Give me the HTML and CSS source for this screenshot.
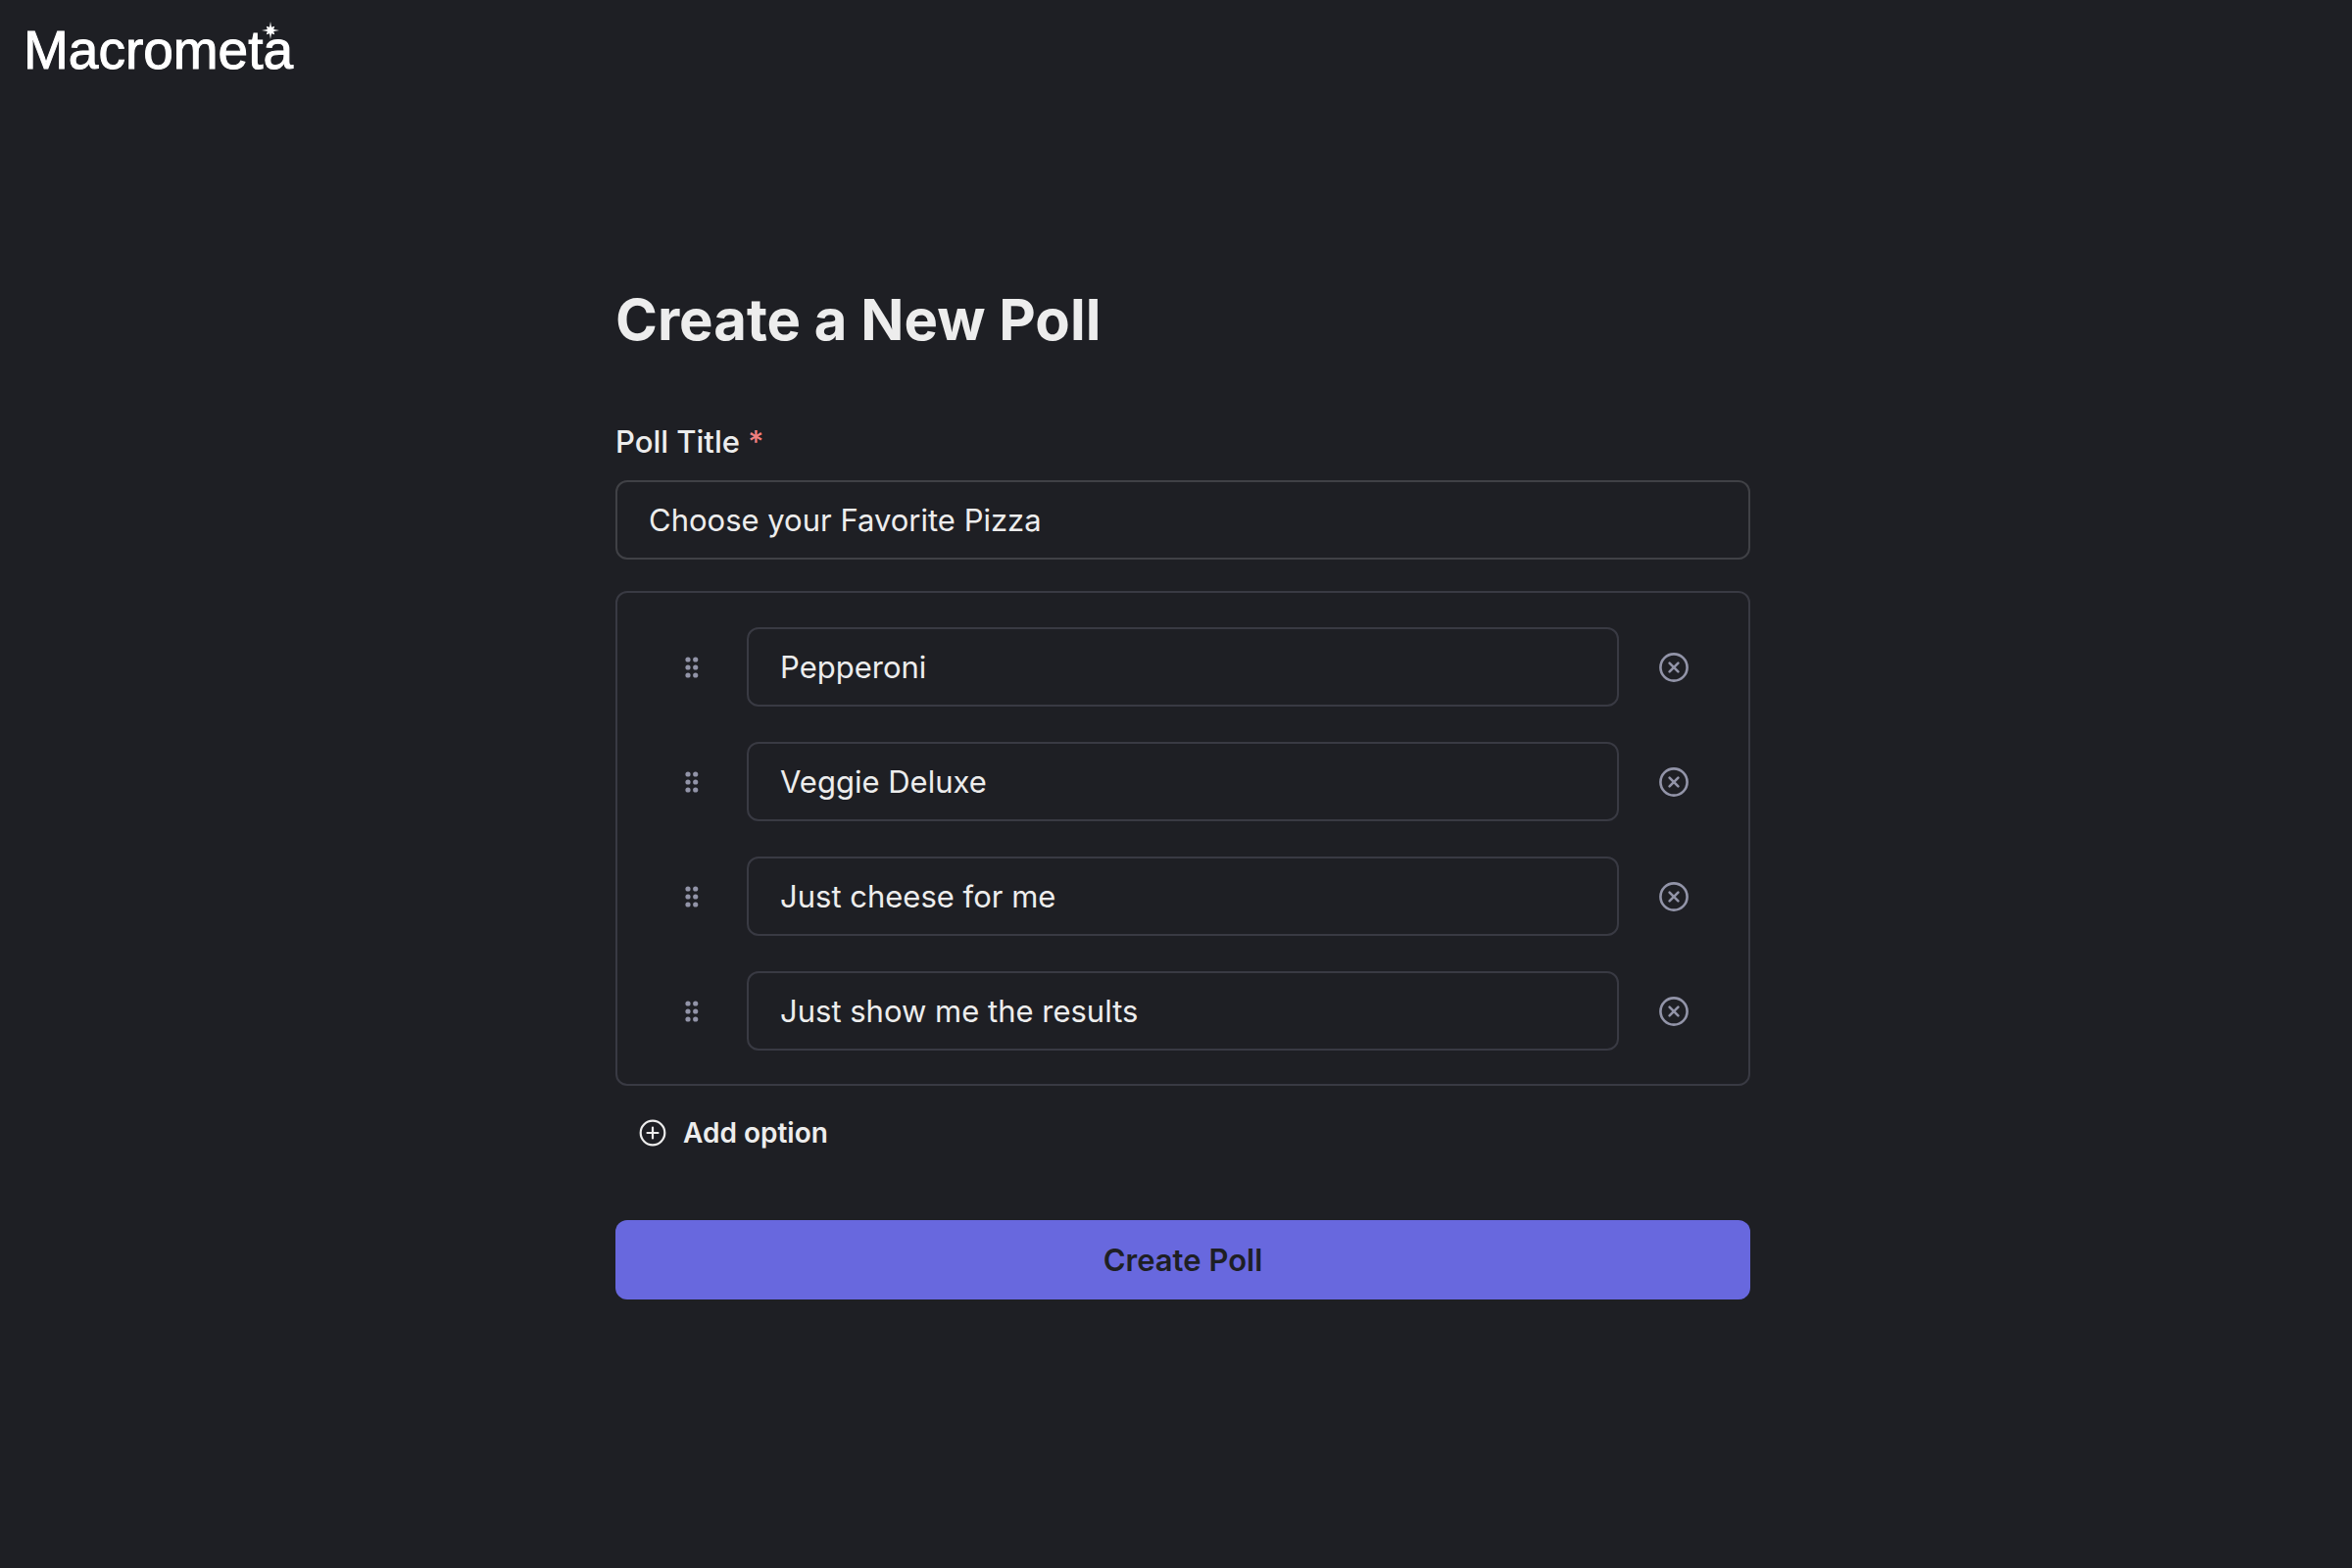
FILE: index.html
```html
<!DOCTYPE html>
<html lang="en">
<head>
<meta charset="utf-8">
<meta name="viewport" content="width=device-width, initial-scale=1">
<title>Create a New Poll</title>
<link rel="stylesheet" href="styles.css">
</head>
<body>
<svg class="sprite" aria-hidden="true">
  <symbol id="grip" viewBox="0 0 14 22">
    <circle cx="3" cy="3" r="2.6"/><circle cx="10.7" cy="3" r="2.6"/>
    <circle cx="3" cy="11" r="2.6"/><circle cx="10.7" cy="11" r="2.6"/>
    <circle cx="3" cy="19" r="2.6"/><circle cx="10.7" cy="19" r="2.6"/>
  </symbol>
  <symbol id="remove" viewBox="0 0 30 30">
    <circle cx="15" cy="15" r="13.6"/><path d="M10.6 10.6l8.8 8.8M19.4 10.6l-8.8 8.8"/>
  </symbol>
</svg>
<header class="header">
  <a class="logo" href="#">Macrometa<svg class="logo-star" viewBox="-9 -9 18 18" aria-hidden="true"><path d="M0-9L1-3.200 4.200-4.200 3.200-1 9 0 3.200 1 4.200 4.200 1 3.200 0 9-1 3.200-4.200 4.200-3.200 1-9 0-3.200-1-4.200-4.200-1-3.200z"/></svg></a>
</header>
<main class="main">
  <form class="poll">
    <h1 class="heading">Create a New Poll</h1>
    <label class="label" for="title">Poll Title <span class="required">*</span></label>
    <input class="field" id="title" type="text" value="Choose your Favorite Pizza">
    <ul class="options">
      <li class="option">
        <button class="icon-button" type="button" aria-label="Move option 1"><svg class="grip"><use href="#grip"/></svg></button>
        <input class="field" type="text" aria-label="Option 1" value="Pepperoni">
        <button class="icon-button" type="button" aria-label="Remove option 1"><svg class="remove"><use href="#remove"/></svg></button>
      </li>
      <li class="option">
        <button class="icon-button" type="button" aria-label="Move option 2"><svg class="grip"><use href="#grip"/></svg></button>
        <input class="field" type="text" aria-label="Option 2" value="Veggie Deluxe">
        <button class="icon-button" type="button" aria-label="Remove option 2"><svg class="remove"><use href="#remove"/></svg></button>
      </li>
      <li class="option">
        <button class="icon-button" type="button" aria-label="Move option 3"><svg class="grip"><use href="#grip"/></svg></button>
        <input class="field" type="text" aria-label="Option 3" value="Just cheese for me">
        <button class="icon-button" type="button" aria-label="Remove option 3"><svg class="remove"><use href="#remove"/></svg></button>
      </li>
      <li class="option">
        <button class="icon-button" type="button" aria-label="Move option 4"><svg class="grip"><use href="#grip"/></svg></button>
        <input class="field" type="text" aria-label="Option 4" value="Just show me the results">
        <button class="icon-button" type="button" aria-label="Remove option 4"><svg class="remove"><use href="#remove"/></svg></button>
      </li>
    </ul>
    <button class="add" type="button"><svg class="add-icon" viewBox="0 0 28 28" aria-hidden="true"><circle cx="14" cy="14" r="12.300"/><path d="M14 8.500v11M8.500 14h11"/></svg>Add option</button>
    <button class="submit" type="submit">Create Poll</button>
  </form>
</main>
</body>
</html>
```
FILE: styles.css
```css
* { box-sizing: border-box; }
body {
  margin: 0;
  min-height: 100vh;
  background: #1e1f24;
  color: #ededed;
  font-family: Inter, "Noto Sans", sans-serif;
  font-size: 31px;
  line-height: 40px;
}
button, input { font: inherit; color: inherit; }
button { background: none; border: 0; padding: 0; cursor: pointer; }
.sprite { display: none; }

.header { display: flex; padding: 16px 24px; }
.logo {
  position: relative;
  color: #fff;
  font-family: "Liberation Sans", Arial, sans-serif;
  font-size: 55px;
  line-height: 70px;
  text-decoration: none;
  -webkit-text-stroke: 1px #fff;
}
.logo-star { position: absolute; top: 6px; right: 14px; width: 18px; height: 18px; fill: #fff; }

.main { display: flex; justify-content: center; padding: 184px 24px 64px 38px; }
.poll { display: flex; flex-direction: column; width: 100%; max-width: 1158px; }
.heading { margin: 0 0 65px; font-size: 58px; font-weight: 700; line-height: 80px; }
.label { margin-bottom: 19px; font-weight: 500; }
.required { color: #f08080; }
.field {
  flex: none;
  width: 100%;
  min-width: 0;
  height: 81px;
  padding: 0 32px;
  background: transparent;
  border: 2px solid #404146;
  border-radius: 12px;
  outline: 0;
}
.options {
  display: flex;
  flex-direction: column;
  gap: 36px;
  margin: 32px 0 28px;
  padding: 35px 36px 34px;
  list-style: none;
  border: 2px solid #393a43;
  border-radius: 12px;
}
.option { display: flex; align-items: center; gap: 16px; }
.option .field { flex: 1; border-color: #393a43; }
.icon-button { display: flex; align-items: center; justify-content: center; flex: none; width: 80px; height: 80px; color: #9294a8; }
.grip { width: 14px; height: 22px; fill: currentColor; }
.remove { width: 30px; height: 30px; fill: none; stroke: currentColor; stroke-width: 2.6; stroke-linecap: round; }
.add {
  display: flex;
  align-items: center;
  align-self: flex-start;
  gap: 17px;
  margin: 0 0 69px 24px;
  font-size: 28px;
  font-weight: 600;
}
.add-icon { width: 28px; height: 28px; fill: none; stroke: currentColor; stroke-width: 2.2; stroke-linecap: round; }
.submit { height: 81px; background: #6868de; border-radius: 12px; color: #1e1f24; font-size: 31px; font-weight: 600; }
```
